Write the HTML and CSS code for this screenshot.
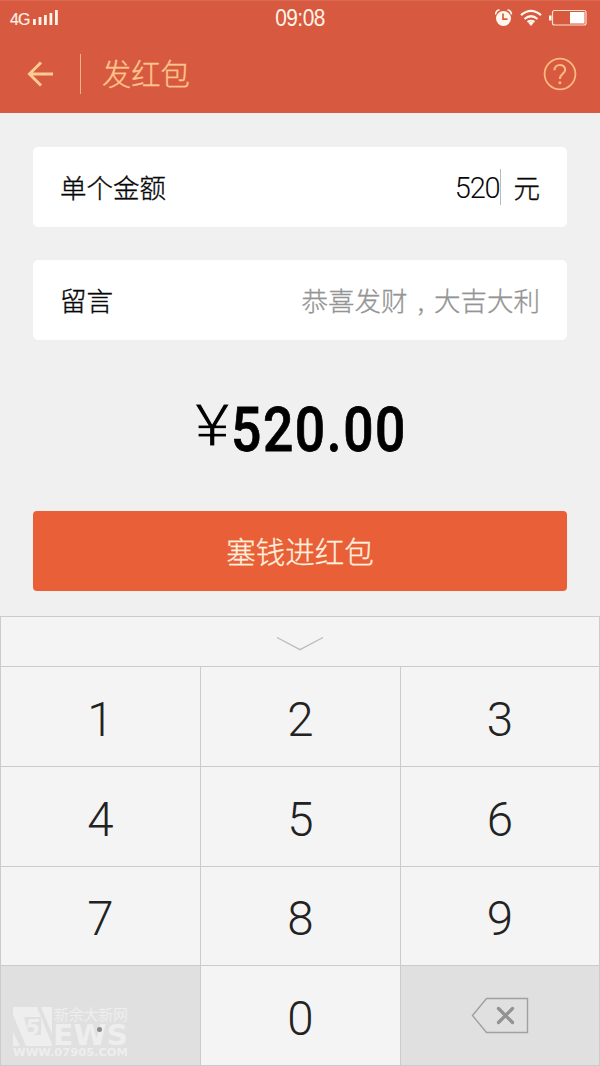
FILE: index.html
```html
<!DOCTYPE html>
<html lang="zh-CN">
<head>
<meta charset="utf-8">
<title>发红包</title>
<link rel="stylesheet" href="styles.css">
</head>
<body>
<header class="header">
  <div class="status">
    <div class="carrier"><span>4G</span>
      <svg width="26" height="16" viewBox="0 0 26 16" fill="#fff3e6"><path d="M0 9h2.800v6H0zM5.600 7h2.800v8h-2.800zM11 5h2.800v10H11zM16.500 3h2.800v12h-2.800zM22 0h2.800v15H22z"/></svg>
    </div>
    <time class="clock">09:08</time>
    <svg class="indicators" width="94" height="20" viewBox="0 0 94 20">
      <circle cx="8.500" cy="10.500" r="7.500" fill="#fff6ec"/>
      <path d="M.5 6.500Q1 2.500 4.500 1.800M16.500 6.500Q16 2.500 12.500 1.800" stroke="#fff6ec" stroke-width="1.600" fill="none"/>
      <path d="M8 5.500v5.700h4.500" stroke="#d85a41" stroke-width="1.700" fill="none"/>
      <path d="M26 7.200Q36 -1.300 46 7.200M29.500 11Q36 5.500 42.500 11M32.500 14Q36 11.500 39.500 14" stroke="#fff6ec" stroke-width="2.200" fill="none"/>
      <path d="M33.500 15Q36 12.500 38.500 15L36 18z" fill="#fff6ec"/>
      <rect x="57.500" y="2.500" width="33.500" height="14.500" rx="2" fill="none" stroke="#fbe0cc" stroke-width="1.200"/>
      <path d="M55.300 7.500v5" stroke="#fff6ec" stroke-width="2.600"/>
      <path d="M75 4h14.500v11.500H75z" fill="#fff"/>
    </svg>
  </div>
  <nav class="nav">
    <svg class="back" width="28" height="26" viewBox="0 0 28 26" fill="none" stroke="#fccb91" stroke-width="3"><path d="M15 1.500L3.500 13 15 24.500M3.500 13H27"/></svg>
    <i class="divider"></i>
    <h1 class="title">发红包</h1>
    <svg class="help" width="34" height="34" viewBox="0 0 34 34" fill="none" stroke="#fab97f" stroke-width="1.800"><circle cx="17" cy="17" r="15.400"/><path d="M11.500 13.200C11.500 6.200 22.200 6.400 22.200 12.800C22.200 16.800 16.900 16.600 16.900 22" stroke-width="2.100"/><circle cx="16.900" cy="25.700" r="1.500" fill="#fab97f" stroke="none"/></svg>
  </nav>
</header>
<main class="form">
  <div class="field"><span class="label">单个金额</span><span class="value">520</span><i class="caret"></i><span class="unit">元</span></div>
  <div class="field"><span class="label">留言</span><span class="hint">恭喜发财<span class="comma">,</span>大吉大利</span></div>
  <div class="total"><span class="yen">¥</span><span class="sum">520.00</span></div>
  <button class="submit">塞钱进红包</button>
</main>
<section class="keyboard">
  <div class="collapse"><svg width="48" height="16" viewBox="0 0 48 16" fill="none" stroke="#bdbdbd" stroke-width="1.400"><path d="M1 1.500L24 13.700 47 1.500"/></svg></div>
  <div class="keys">
    <div class="key">1</div><div class="key">2</div><div class="key">3</div>
    <div class="key">4</div><div class="key">5</div><div class="key">6</div>
    <div class="key">7</div><div class="key">8</div><div class="key">9</div>
    <div class="key gray">
      <i class="dot"></i>
      <svg class="brand" width="122" height="54" viewBox="0 0 122 54" fill="#eeeeee">
        <path d="M1 1H40V40H1z"/>
        <path d="M1 9L14 40H8L1 26zM25 1h4l11 27v10zM12 11h17v18H17z" fill="#e0e0e0"/>
        <text class="brand-five" x="13" y="29">5</text>
        <text class="brand-cn" x="42" y="13.500" textLength="74">新余大新网</text>
        <text class="brand-ews" x="41" y="39" textLength="75" lengthAdjust="spacingAndGlyphs">EWS</text>
        <text class="brand-url" x="1" y="49.500" textLength="115" lengthAdjust="spacingAndGlyphs">WWW.07905.COM</text>
      </svg>
    </div>
    <div class="key">0</div>
    <div class="key gray"><svg width="58" height="37" viewBox="0 0 58 37" fill="none"><path d="M1.500 18.500L15.500 1.500H56.500V35.500H15.500z" stroke="#a0a0a0" stroke-width="1.400"/><path d="M27.500 11.500l14 14M41.500 11.500l-14 14" stroke="#929292" stroke-width="3.300" stroke-linecap="round"/></svg></div>
  </div>
</section>
</body>
</html>
```

FILE: styles.css
```css
* { box-sizing: border-box; }
body { margin: 0; width: 600px; height: 1066px; overflow: hidden; background: #f0f0f0; font-family: "Liberation Sans", "Noto Sans CJK SC", sans-serif; }
svg { display: block; flex: none; }
.header { height: 113px; background: #d75940; border-top: 1px solid #dc6850; }
.status { height: 32px; display: grid; grid-template-columns: 1fr 60px 1fr; align-items: center; color: #fff3e6; }
.carrier { display: flex; align-items: center; gap: 3px; padding: 3px 0 0 10px; font: 16px/18px "Liberation Sans", sans-serif; letter-spacing: -.9px; -webkit-text-stroke: .2px #fff3e6; }
.carrier svg { margin-bottom: 3px; }
.clock { text-align: center; font-size: 23.5px; line-height: 33px; padding-top: 1px; letter-spacing: -.6px; transform: scaleX(.89); }
.indicators { justify-self: end; margin-right: 11px; }
.nav { display: flex; align-items: center; height: 80px; padding: 1px 23px 0 26px; }
.divider { width: 1px; height: 40px; margin-left: 26px; background: #f3b382; }
.title { margin: -3px auto 0 21px; color: #fbc58c; font: 300 29.3px/40px "Noto Sans CJK SC", sans-serif; -webkit-text-stroke: .35px #fbc58c; }
.form { height: 503px; padding: 34px 33px 0; display: flex; flex-direction: column; }
.field { height: 80px; margin-bottom: 33px; padding: 0 27px; display: flex; align-items: center; background: #fff; border-radius: 5px; color: #080808; font: 300 26.5px/40px "Noto Sans CJK SC", sans-serif; -webkit-text-stroke: .35px currentColor; }
.label { margin-right: auto; }
.value { font: 300 29px/40px Roboto, sans-serif; letter-spacing: -1.2px; padding-top: 2px; -webkit-text-stroke: 0; }
.caret { width: 1px; height: 36px; background: #bbb; }
.unit { margin-left: 13px; }
.hint { color: #949494; -webkit-text-stroke-width: .3px; }
.comma { display: inline-block; width: 1em; text-align: center; }
.total { height: 60px; margin-top: 25px; padding-left: 162px; display: flex; color: #000; }
.yen { width: 36px; font: 62px/53px "Liberation Sans", sans-serif; -webkit-text-stroke: 1.1px #f0f0f0; }
.sum { font: 500 61px/65px Roboto, sans-serif; letter-spacing: 1.8px; transform: scaleX(.875); transform-origin: left; -webkit-text-stroke: .8px #000; }
.submit { height: 80px; margin-top: 53px; border: 0; border-radius: 4px; background: #e96038; color: #fff0df; font: 300 29.5px/78px "Noto Sans CJK SC", sans-serif; padding: 0 0 3px; -webkit-text-stroke: .3px #fff0df; }
.keyboard { height: 450px; background: #f4f4f4; border: 1px solid #cbcbcb; border-width: 1px 1px 0; }
.collapse { height: 49px; display: flex; justify-content: center; align-items: center; padding-top: 5px; }
.keys { display: grid; grid-template: 99px 99px 98px 99px / 199px 199px 198px; gap: 1px; background: #cbcbcb; border: solid #cbcbcb; border-width: 1px 0; }
.key { position: relative; display: flex; align-items: center; justify-content: center; background: #f4f4f4; color: #222; font: 300 47.5px/56px Roboto, sans-serif; padding-top: 6px; }
.gray { background: #e0e0e0; padding: 0; }
.brand { position: absolute; left: 11px; top: 40px; overflow: visible; }
.dot { position: absolute; left: 96px; top: 61px; z-index: 1; width: 5px; height: 5px; border-radius: 50%; background: #8b8b8b; }
.brand-five { font: italic bold 22px "DejaVu Sans", sans-serif; }
.brand-cn { font: 15px "Noto Sans CJK SC", sans-serif; }
.brand-ews { font: bold 29px "DejaVu Sans", sans-serif; }
.brand-url { font: bold 10.5px "DejaVu Sans", sans-serif; }
```
